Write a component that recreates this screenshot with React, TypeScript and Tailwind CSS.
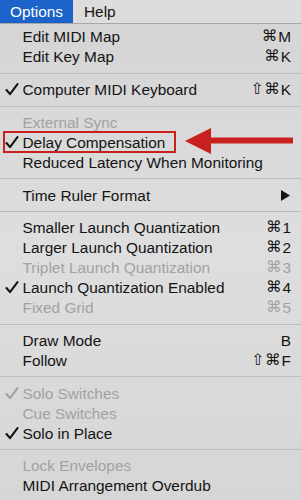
import React from 'react';

type Item =
  | { sep: true }
  | { sep?: false; label: string; key?: string; checked?: boolean; disabled?: boolean; submenu?: boolean; marked?: boolean };

const items: Item[] = [
  { label: 'Edit MIDI Map', key: '⌘M' },
  { label: 'Edit Key Map', key: '⌘K' },
  { sep: true },
  { label: 'Computer MIDI Keyboard', key: '⇧⌘K', checked: true },
  { sep: true },
  { label: 'External Sync', disabled: true },
  { label: 'Delay Compensation', checked: true, marked: true },
  { label: 'Reduced Latency When Monitoring' },
  { sep: true },
  { label: 'Time Ruler Format', submenu: true },
  { sep: true },
  { label: 'Smaller Launch Quantization', key: '⌘1' },
  { label: 'Larger Launch Quantization', key: '⌘2' },
  { label: 'Triplet Launch Quantization', key: '⌘3', disabled: true },
  { label: 'Launch Quantization Enabled', key: '⌘4', checked: true },
  { label: 'Fixed Grid', key: '⌘5', disabled: true },
  { sep: true },
  { label: 'Draw Mode', key: 'B' },
  { label: 'Follow', key: '⇧⌘F' },
  { sep: true },
  { label: 'Solo Switches', checked: true, disabled: true },
  { label: 'Cue Switches', disabled: true },
  { label: 'Solo in Place', checked: true },
  { sep: true },
  { label: 'Lock Envelopes', disabled: true },
  { label: 'MIDI Arrangement Overdub' },
];

// shortcut: symbols in DejaVu, letters in Liberation
const Shortcut = ({ text }: { text: string }) => (
  <span className="flex items-center">
    {text.split('').map((ch, i) =>
      ch === '⌘' || ch === '⇧' ? (
        <span key={i} className="font-['DejaVu_Sans'] text-[15.5px] mr-[1px]">{ch}</span>
      ) : (
        <span key={i}>{ch}</span>
      )
    )}
  </span>
);

const Check = ({ color }: { color: string }) => (
  <svg width="14" height="13" viewBox="0 0 14 13" className="ml-[5px]">
    <path d="M1.5 7 L5 11.2 L12.5 1.2" fill="none" stroke={color} strokeWidth="2.1" strokeLinecap="round" strokeLinejoin="round" />
  </svg>
);

const App: React.FC = () => {
  return (
    <div className="w-[301px] h-[500px] overflow-hidden bg-gradient-to-b from-[#d4d4d4] via-[#dedede] to-[#d6d6d6] font-['Liberation_Sans',Arial,sans-serif] text-[15.4px] text-[#141414]">
      {/* menu bar */}
      <div className="flex h-[24px] bg-[#dddddd] border-b border-[#a8a8a8]">
        <div className="w-[73px] h-[23px] bg-[#1b62c9] text-white flex items-center pl-[10px]">Options</div>
        <div className="flex items-center pl-[11px]">Help</div>
      </div>

      <div className="pt-[3px]">
        {items.map((it, i) =>
          it.sep ? (
            <div key={i} className="h-[12.7px] flex items-center">
              <div className="w-full h-[1px] bg-[#bdbdbd]" />
            </div>
          ) : (
            <div
              key={i}
              className={`relative h-[20px] flex items-center pr-[10px] ${it.disabled ? 'text-[#a2a2a2]' : ''}`}
            >
              <div className="w-[22.5px] flex items-center shrink-0">
                {it.checked && <Check color={it.disabled ? '#a2a2a2' : '#141414'} />}
              </div>
              <span className="flex-1 whitespace-nowrap">{it.label}</span>
              {it.key && <Shortcut text={it.key} />}
              {it.submenu && (
                <svg width="9" height="11" viewBox="0 0 9 11" className="mr-[1px]">
                  <path d="M0 0 L9 5.5 L0 11 Z" fill="#141414" />
                </svg>
              )}
              {it.marked && (
                <>
                  <div className="absolute left-[3px] top-[-1px] w-[173px] h-[22px] border-2 border-[#c8201e]" />
                  <svg width="110" height="28" viewBox="0 0 110 28" className="absolute left-[184px] top-[-5px]">
                    <path d="M1 14 L27 1 L27 10.5 L109 10.5 L109 16.5 L27 16.5 L27 27 Z" fill="#c8201e" />
                  </svg>
                </>
              )}
            </div>
          )
        )}
      </div>
    </div>
  );
};

export default App;
